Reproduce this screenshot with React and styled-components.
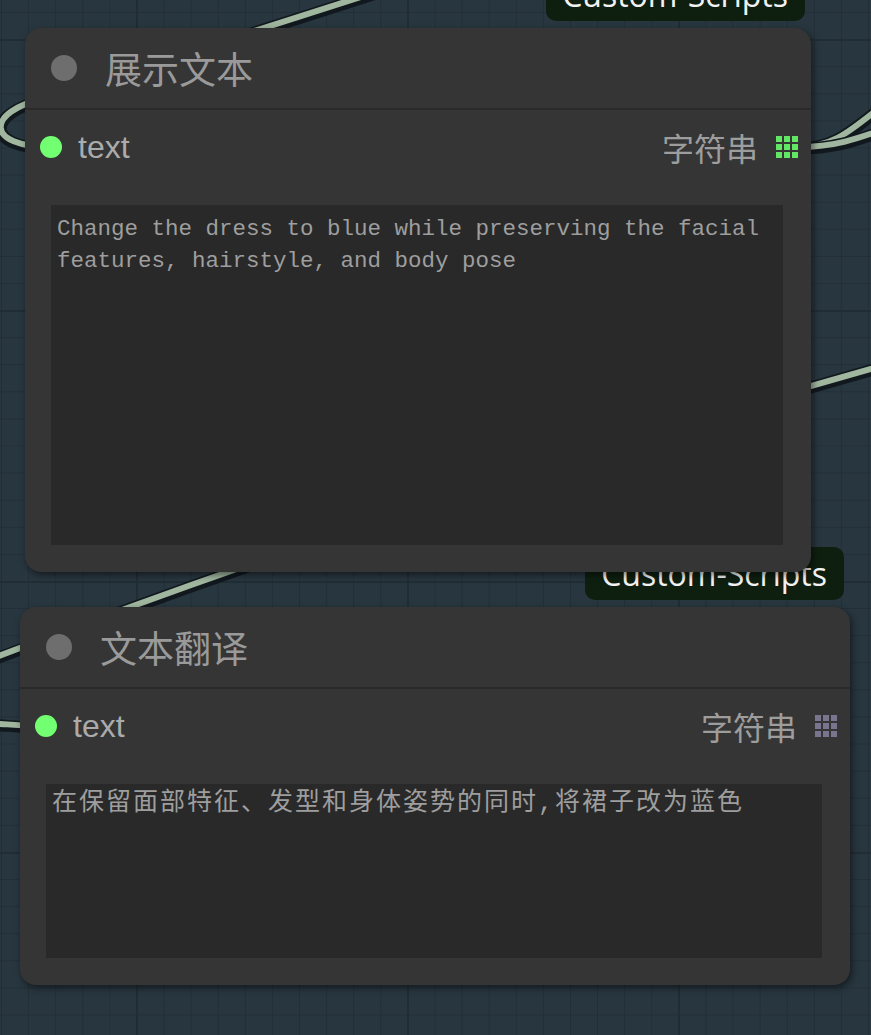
import styled, { createGlobalStyle } from "styled-components"

const GlobalStyle = createGlobalStyle`
    html, body {
        margin: 0;
        padding: 0;
        background: #28363f;
    }
`

const Canvas = styled.div`
    position: relative;
    width: 871px;
    height: 1035px;
    overflow: hidden;
    background-color: #28363f;
    background-image:
        linear-gradient(to right, #212d35 2px, transparent 2px),
        linear-gradient(to bottom, #212d35 2px, transparent 2px),
        linear-gradient(to right, #232f38 1px, transparent 1px),
        linear-gradient(to bottom, #232f38 1px, transparent 1px);
    background-size: 271px 271px, 271px 271px, 27.1px 27.1px, 27.1px 27.1px;
    background-position: 136px 0, 0 39px, 1px 0, 0 12px;
`

const Wires = styled.svg`
    position: absolute;
    inset: 0;
    width: 871px;
    height: 1035px;
`

const Node = styled.div`
    position: absolute;
    left: ${({ $x }) => $x}px;
    top: ${({ $y }) => $y}px;
    width: ${({ $w }) => $w}px;
    display: flex;
    flex-direction: column;
    background: #353535;
    border-radius: 16px;
    box-shadow: 2px 3px 7px rgba(0, 0, 0, 0.5);
`

const Badge = styled.div`
    position: absolute;
    right: 6px;
    bottom: calc(100% + 7px);
    height: 53px;
    padding: 0 17px 0 16px;
    display: flex;
    align-items: center;
    background: #0e1f10;
    border-radius: 10px;
    color: #f2f2f2;
    font-family: "Open Sans", "Noto Sans", sans-serif;
    font-size: 32px;
    white-space: nowrap;
`

const Title = styled.div`
    height: 80px;
    display: flex;
    align-items: center;
    gap: 28px;
    padding-left: 26px;
    border-bottom: 2px solid #2a2a2a;
    color: #9a9a9a;
    font-family: "Noto Sans CJK SC", "Liberation Sans", sans-serif;
    font-size: 37px;
`

const TitleDot = styled.span`
    width: 26px;
    height: 26px;
    border-radius: 50%;
    background: #6e6e6e;
`

const Row = styled.div`
    height: 74px;
    display: flex;
    align-items: center;
    padding: 0 13px 0 15px;
    font-family: "Liberation Sans", "Noto Sans CJK SC", sans-serif;
    font-size: 32px;
`

const InputDot = styled.span`
    width: 22px;
    height: 22px;
    border-radius: 50%;
    background: #72ff72;
`

const Label = styled.span`
    margin-left: 16px;
    color: #ababab;
    flex: 1;
`

const TypeName = styled.span`
    margin-right: 18px;
    color: #9d9d9d;
`

const GridIcon = styled.span`
    display: grid;
    grid-template-columns: repeat(3, 6px);
    grid-template-rows: repeat(3, 6px);
    gap: 2px;
    & > i {
        background: ${({ $color }) => $color};
    }
`

const TextBox = styled.div`
    margin: 21px 28px 27px 26px;
    height: ${({ $h }) => $h}px;
    box-sizing: border-box;
    padding: ${({ $cjk }) => ($cjk ? "4px 6px" : "8px 6px")};
    background: #292929;
    color: #9e9e9e;
    font-family: "Liberation Mono", "Noto Sans CJK SC", monospace;
    font-size: ${({ $cjk }) => ($cjk ? "25px" : "22.5px")};
    line-height: 32px;
    letter-spacing: ${({ $cjk }) => ($cjk ? "2px" : "0")};
    white-space: pre-wrap;
    overflow: hidden;
`

const Wire = ({ d }) => (
    <g>
        <path d={d} fill="none" stroke="#11191e" strokeWidth="12" transform="translate(0 1.5)" />
        <path d={d} fill="none" stroke="#a0b69f" strokeWidth="6" />
    </g>
)

const TextNode = ({ x, y, w, title, boxHeight, cjk, iconColor, text }) => (
    <Node $x={x} $y={y} $w={w}>
        <Badge>Custom-Scripts</Badge>
        <Title>
            <TitleDot />
            {title}
        </Title>
        <Row>
            <InputDot />
            <Label>text</Label>
            <TypeName>字符串</TypeName>
            <GridIcon $color={iconColor}>
                {Array.from({ length: 9 }).map((_, i) => (
                    <i key={i} />
                ))}
            </GridIcon>
        </Row>
        <TextBox $h={boxHeight} $cjk={cjk}>{text}</TextBox>
    </Node>
)

const App = () => {
    return (
        <>
            <GlobalStyle />
            <Canvas>
                <Wires viewBox="0 0 871 1035">
                    <Wire d="M 51 147 C -15 147, -15 112, 45 98 L 420 -22" />
                    <Wire d="M -40 671 Q 400 500 920 355" />
                    <Wire d="M -60 722 C 0 722, 10 726, 46 726" />
                    <Wire d="M 798 147 C 840 147, 855 125, 905 88" />
                    <Wire d="M 798 147 C 850 147, 870 132, 945 108" />
                </Wires>
                <TextNode
                    x={20}
                    y={607}
                    w={830}
                    title="文本翻译"
                    boxHeight={174}
                    cjk
                    iconColor="#7a758e"
                    text="在保留面部特征、发型和身体姿势的同时,将裙子改为蓝色"
                />
                <TextNode
                    x={25}
                    y={28}
                    w={786}
                    title="展示文本"
                    boxHeight={340}
                    iconColor="#63e663"
                    text="Change the dress to blue while preserving the facial features, hairstyle, and body pose"
                />
            </Canvas>
        </>
    )
}

export default App
